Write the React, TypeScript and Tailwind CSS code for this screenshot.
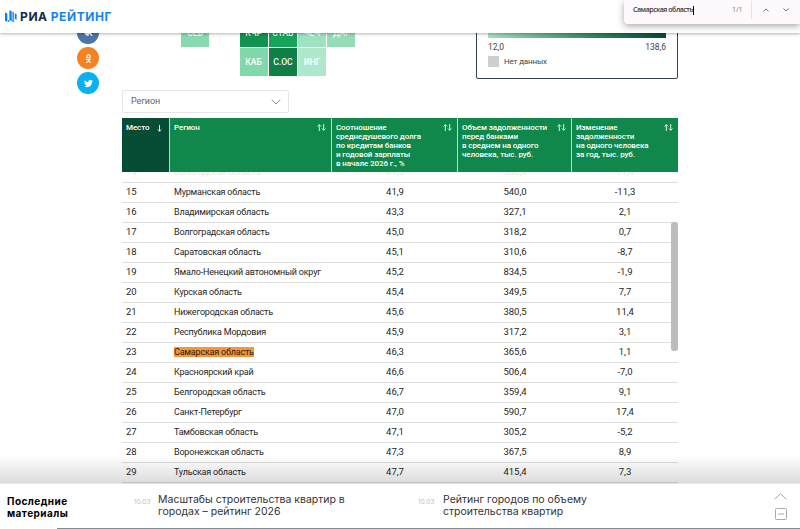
import React from 'react';
import { FaOdnoklassniki, FaTwitter, FaVk } from 'react-icons/fa';

type Row = [number, string, string, string, string];

const rows: Row[] = [
    [14, 'Вологодская область', '41,5', '530,4', '11,4'],
    [15, 'Мурманская область', '41,9', '540,0', '-11,3'],
    [16, 'Владимирская область', '43,3', '327,1', '2,1'],
    [17, 'Волгоградская область', '45,0', '318,2', '0,7'],
    [18, 'Саратовская область', '45,1', '310,6', '-8,7'],
    [19, 'Ямало-Ненецкий автономный округ', '45,2', '834,5', '-1,9'],
    [20, 'Курская область', '45,4', '349,5', '7,7'],
    [21, 'Нижегородская область', '45,6', '380,5', '11,4'],
    [22, 'Республика Мордовия', '45,9', '317,2', '3,1'],
    [23, 'Самарская область', '46,3', '365,6', '1,1'],
    [24, 'Красноярский край', '46,6', '506,4', '-7,0'],
    [25, 'Белгородская область', '46,7', '359,4', '9,1'],
    [26, 'Санкт-Петербург', '47,0', '590,7', '17,4'],
    [27, 'Тамбовская область', '47,1', '305,2', '-5,2'],
    [28, 'Воронежская область', '47,3', '367,5', '8,9'],
    [29, 'Тульская область', '47,7', '415,4', '7,3'],
];

const tiles = [
    { name: 'СЕВ', style: 'col-start-1 bg-[#87d9b0]' },
    { name: 'КЧР', style: 'col-start-3 bg-[#12934f]' },
    { name: 'СТАВ', style: 'col-start-4 bg-[#16a35a]' },
    { name: 'ЧЕЧ', style: 'col-start-5 bg-[#9fe2c1]' },
    { name: 'ДАГ', style: 'col-start-6 bg-[#95ddb9]' },
    { name: 'КАБ', style: 'col-start-3 bg-[#82d8ad]' },
    { name: 'С.ОС', style: 'col-start-4 bg-[#0f7f46]' },
    { name: 'ИНГ', style: 'col-start-5 bg-[#afe7cb]' },
];

const columns = 'grid grid-cols-[48px_162px_126px_114px_106px]';

const SortIcon: React.FC<{ single?: boolean }> = ({ single }) => (
    <svg className={single ? 'w-[5px] h-[7px] mt-[1px] mr-[2px] shrink-0' : 'w-[9px] h-[7px] shrink-0'} viewBox={single ? '5 0 5 8' : '0 0 10 8'} fill="none" stroke="white" strokeWidth="1">
        {!single && <path d="M2.5 8V.8M.5 2.8l2-2 2 2" />}
        <path d="M7.5 0v7.2M5.5 5.2l2 2 2-2" />
    </svg>
);

const HeadCell: React.FC<{ lines: string[]; first?: boolean; last?: boolean }> = ({ lines, first, last }) => (
    <div className={`flex justify-between pt-[5px] pl-[4px] pr-[5px] ${first ? 'bg-[#064c34]' : 'bg-[#10884b]'} ${last ? '' : 'border-r border-[#b5dcc7]'}`}>
        <div className="text-[8px] leading-[9px] font-medium tracking-[-0.1px] whitespace-nowrap">
            {lines.map((line) => <div key={line}>{line}</div>)}
        </div>
        <div className="pt-[1px] -ml-2 flex items-start"><SortIcon single={first} /></div>
    </div>
);

const Header: React.FC = () => (
    <header className="absolute inset-x-0 top-0 z-20 h-[33px] bg-white shadow-[0_1px_3px_rgba(0,0,0,0.3)]">
        <div className="flex items-center h-full pl-[5px] gap-[3px]">
            <svg className="w-[12px] h-[14px]" viewBox="0 0 12 14">
                <path d="M0 2.5l2.3 1v8.2L0 10.7z" fill="#0b7df0" />
                <path d="M2.9 9.8l1.4.6v1.8l-1.4-.6z" fill="#0b7df0" />
                <path d="M4.4 .3l2.3 1v9.9l-2.3-1z" fill="#0b7df0" />
                <path d="M7.3 1.6l1.9.8v10.2l-1.9-.8z" fill="#3b97f4" />
                <path d="M10 3.4l1.6.7v5.6L10 9z" fill="#0b7df0" />
            </svg>
            <div className="font-['Inter',sans-serif] font-bold text-[12px] leading-[14px] tracking-[0.6px] whitespace-nowrap text-[#12284a]">
                РИА<span className="ml-[3px] text-[#1485ef]">РЕЙТИНГ</span>
            </div>
        </div>
    </header>
);

const FindBar: React.FC = () => (
    <div className="absolute top-0 right-0 z-30 w-[176px] h-[24px] flex items-center bg-[#fdf9fd] rounded-bl-[4px] shadow-[0_2px_7px_rgba(0,0,0,0.35)] pb-[4px]">
        <div className="w-[100px] pl-[9px] flex items-center font-['Open_Sans',sans-serif] text-[7px] font-semibold tracking-[-0.45px] text-[#393439] whitespace-nowrap">
            Самарская область<i className="w-px h-[9px] bg-black" />
        </div>
        <span className="w-[27px] pl-[8px] font-['Open_Sans',sans-serif] text-[7px] text-[#777]">1/1</span>
        <i className="w-px h-[18px] bg-[#e8e1e8]" />
        <svg className="ml-[11px] w-[6px] h-[4px]" viewBox="0 0 6 4" fill="none" stroke="#666" strokeWidth="0.9"><path d="M.4 3.5L3 .9l2.6 2.6" /></svg>
        <svg className="ml-[14px] w-[6px] h-[4px]" viewBox="0 0 6 4" fill="none" stroke="#666" strokeWidth="0.9"><path d="M.4.5L3 3.1 5.6.5" /></svg>
    </div>
);

const Social: React.FC = () => (
    <div className="w-[104px] pt-[22px] pl-[77px] flex flex-col gap-[3px] text-white">
        <div className="size-[22px] rounded-full bg-[#4b75a8] flex items-center justify-center"><FaVk size={10} /></div>
        <div className="size-[22px] rounded-full bg-[#f58220] flex items-center justify-center"><FaOdnoklassniki size={9} /></div>
        <div className="size-[22px] rounded-full bg-[#08b1f2] flex items-center justify-center"><FaTwitter size={9} /></div>
    </div>
);

const Legend: React.FC = () => (
    <div className="ml-auto w-[202px] h-[79px] border border-[#354052] rounded-[2px] pt-[26px] px-[11px] text-[8.5px] text-[#444]">
        <div className="h-[11px] bg-linear-to-r from-[#a0e2c0] via-[#30845f] via-60% to-[#064c34]" />
        <div className="flex justify-between leading-[10px] pt-[4px]">
            <span>12,0</span>
            <span>138,6</span>
        </div>
        <div className="flex items-center gap-[5px] pt-[4px] leading-[11px] text-[8px] tracking-[-0.15px]">
            <i className="size-[11px] bg-[#cfcfcf]" />
            Нет данных
        </div>
    </div>
);

const DebtTable: React.FC = () => (
    <div className="mt-[5px] w-[556px]">
        <div className={`${columns} h-[54px] text-white relative z-10`}>
            <HeadCell first lines={['Место']} />
            <HeadCell lines={['Регион']} />
            <HeadCell lines={['Соотношение', 'среднедушевого долга', 'по кредитам банков', 'и годовой зарплаты', 'в начале 2026 г., %']} />
            <HeadCell lines={['Объем задолженности', 'перед банками', 'в среднем на одного', 'человека, тыс. руб.']} />
            <HeadCell last lines={['Изменение', 'задолженности', 'на одного человека', 'за год, тыс. руб.']} />
        </div>
        <div className="relative h-[312px] overflow-hidden">
            <div className="-mt-[9px]">
                {rows.map(([place, region, ratio, debt, change]) => (
                    <div key={place} className={`${columns} h-[20px] items-center border-b border-[#dedede] pb-px text-[9.5px] leading-[12px] ${place === 14 ? 'text-[#e4e4e4]' : 'text-[#262626]'}`}>
                        <span className="pl-[4px]">{place}</span>
                        <span className="pl-[4px] text-[9px] tracking-[-0.2px] whitespace-nowrap">
                            <span className={place === 23 ? 'bg-[#f6963b] text-[#302010]' : ''}>{region}</span>
                        </span>
                        <span className="text-center">{ratio}</span>
                        <span className="text-center">{debt}</span>
                        <span className="text-center">{change}</span>
                    </div>
                ))}
            </div>
            <div className="absolute right-0 top-[50px] w-[7px] h-[129px] rounded-[3px] bg-[#bcbcbc]" />
        </div>
    </div>
);

const Latest: React.FC = () => (
    <footer className="absolute inset-x-0 bottom-0 z-20">
        <div className="h-[29px] bg-linear-to-b from-transparent to-black/14 border-b border-black/10" />
        <div className="h-[45px] flex bg-white pt-[9px] font-['Inter',sans-serif]">
            <h2 className="w-[134px] pl-[7px] pt-[2px] text-[10px] leading-[12px] font-bold text-black tracking-[0.45px]">Последние<br />материалы</h2>
            <div className="w-[284px] flex text-[#333]">
                <span className="w-[24px] pt-[5px] text-[6.5px] leading-[8px] text-[#bbb]">10.03</span>
                <p className="pt-px text-[10.5px] leading-[12px] whitespace-nowrap">Масштабы строительства квартир в<br />городах – рейтинг 2026</p>
            </div>
            <div className="flex text-[#333]">
                <span className="w-[25px] pt-[5px] text-[6.5px] leading-[8px] text-[#bbb]">10.03</span>
                <p className="pt-px text-[10.5px] leading-[12px] whitespace-nowrap">Рейтинг городов по объему<br />строительства квартир</p>
            </div>
            <div className="ml-auto mr-[13px] flex flex-col items-center gap-[8px]">
                <svg className="w-[13px] h-[7px]" viewBox="0 0 13 7" fill="none" stroke="#aaa"><path d="M.5 6.3l6-5.5 6 5.5" /></svg>
                <svg className="w-[12px] h-[12px]" viewBox="0 0 12 12" fill="none" stroke="#aaa"><rect x=".5" y=".5" width="11" height="11" rx="1" /><path d="M3 6h6" /></svg>
            </div>
        </div>
        <div className="absolute bottom-0 right-0 left-[57px] h-px bg-[#7e8d92]" />
    </footer>
);

const App: React.FC = () => {
    return (
        <div className="relative w-full h-[529px] overflow-hidden bg-white font-['Roboto',sans-serif]">
            <Header />
            <FindBar />
            <main className="flex">
                <Social />
                <div className="ml-[18px] w-[556px]">
                    <div className="flex h-[79px]">
                        <div className="ml-[59px] mt-[19px] grid grid-cols-[repeat(6,28px)] auto-rows-[28px] gap-[1.3px] self-start text-white text-[8.5px] font-medium">
                            {tiles.map((tile) => (
                                <div key={tile.name} className={`flex items-center justify-center ${tile.style}`}>{tile.name}</div>
                            ))}
                        </div>
                        <Legend />
                    </div>
                    <div className="mt-[11px] w-[167px] h-[23px] border border-[#e6e6e6] rounded-[2px] flex items-center justify-between pl-[8px] pr-[7px] text-[9px] tracking-[-0.1px] text-[#666]">
                        Регион
                        <svg className="w-[10px] h-[6px]" viewBox="0 0 10 6" fill="none" stroke="#888"><path d="M.8.6L5 5 9.2.6" /></svg>
                    </div>
                    <DebtTable />
                </div>
            </main>
            <Latest />
        </div>
    );
};

export default App;
